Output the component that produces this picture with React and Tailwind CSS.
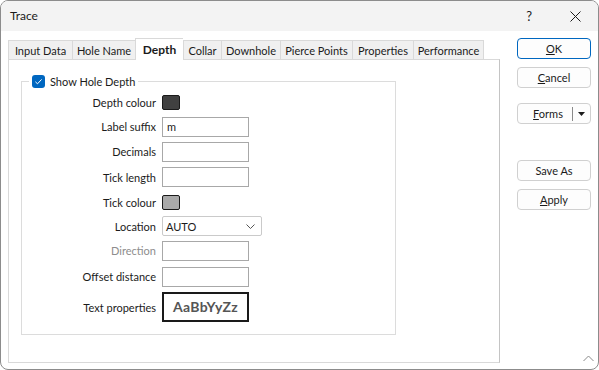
import React from "react";

const tabs = [
  { label: "Input Data", w: "w-[64px]" },
  { label: "Hole Name", w: "w-[63px]" },
  { label: "Depth", w: "w-[48px]", active: true },
  { label: "Collar", w: "w-[38px]" },
  { label: "Downhole", w: "w-[59px]" },
  { label: "Pierce Points", w: "w-[72px]" },
  { label: "Properties", w: "w-[61px]" },
  { label: "Performance", w: "w-[71px]", last: true },
];

function Row({ label, disabled, children, h }) {
  return (
    <div className={`flex items-center ${h}`}>
      <span
        className={`w-[134px] text-right ${disabled ? "text-[#8d8d8d]" : "text-[#1b1b1b]"}`}
      >
        {label}
      </span>
      <div className="ml-[6px] flex items-center">{children}</div>
    </div>
  );
}

function TextBox({ value }) {
  return (
    <div className="flex h-[20px] w-[87px] items-center border border-[#a8a8a8] bg-white px-[4px] text-[#1b1b1b]">
      {value}
    </div>
  );
}

function Swatch({ color }) {
  return <div className={`h-[15px] w-[18px] rounded-[2px] border border-[#1a1a1a] ${color}`} />;
}

function Button({ children, primary, className = "" }) {
  return (
    <button
      className={`flex h-[21px] w-[74px] items-center justify-center rounded-[4px] border bg-[#fdfdfd] text-[#1b1b1b] ${
        primary ? "border-[#0067c0]" : "border-[#d0d0d0]"
      } ${className}`}
    >
      {children}
    </button>
  );
}

export default function App() {
  return (
    <div className="flex h-[370px] w-[599px] flex-col overflow-hidden rounded-[8px] border border-[#8c8c8c] bg-white font-['Lato',sans-serif] text-[11px] leading-none">
      {/* title bar */}
      <div className="flex h-[30px] shrink-0 items-center bg-[#f3f3f3] pl-[9px] text-[12px] text-[#1b1b1b]">
        <span>Trace</span>
        <span className="ml-auto mr-[38px] text-[13px]">?</span>
        <svg width="11" height="11" viewBox="0 0 11 11" className="mr-[17px]">
          <path d="M0.5 0.5 L10.5 10.5 M10.5 0.5 L0.5 10.5" stroke="#1b1b1b" strokeWidth="1" />
        </svg>
      </div>

      <div className="flex flex-1 pl-[7px] pt-[7px]">
        {/* tabs + page */}
        <div className="flex w-[492px] flex-col">
          <div className="flex h-[21px] items-end">
            {tabs.map((t) =>
              t.active ? (
                <div
                  key={t.label}
                  className={`relative z-10 -mb-px flex h-[22px] ${t.w} shrink-0 items-center justify-center border-l border-t border-[#d9d9d9] bg-white text-[12px] font-bold text-[#1b1b1b]`}
                >
                  {t.label}
                </div>
              ) : (
                <div
                  key={t.label}
                  className={`flex h-[19px] ${t.w} shrink-0 items-center justify-center border-l border-t border-[#d9d9d9] bg-[#f0f0f0] text-[#1b1b1b] ${
                    t.last ? "border-r" : ""
                  }`}
                >
                  {t.label}
                </div>
              )
            )}
          </div>

          <div className="h-[304px] border border-[#d9d9d9] border-r-[#c4c4c4] bg-white pl-[12px] pt-[21px]">
            {/* group box */}
            <div className="relative h-[254px] w-[375px] border border-[#dcdcdc] pt-[8px]">
              <div className="absolute -top-[7px] left-[7px] flex items-center bg-white px-[3px] text-[#1b1b1b]">
                <span className="flex h-[13px] w-[13px] items-center justify-center rounded-[3px] bg-[#0067c0]">
                  <svg width="13" height="13" viewBox="0 0 13 13">
                    <path d="M3.4 6.8 L5.5 8.8 L9.6 4.4" fill="none" stroke="white" strokeWidth="1" />
                  </svg>
                </span>
                <span className="ml-[5px]">Show Hole Depth</span>
              </div>

              <Row label="Depth colour" h="h-[24px]">
                <Swatch color="bg-[#404040]" />
              </Row>
              <Row label="Label suffix" h="h-[25px]">
                <TextBox value="m" />
              </Row>
              <Row label="Decimals" h="h-[25px]">
                <TextBox />
              </Row>
              <Row label="Tick length" h="h-[26px]">
                <TextBox />
              </Row>
              <Row label="Tick colour" h="h-[24px]">
                <Swatch color="bg-[#a9a9a9]" />
              </Row>
              <Row label="Location" h="h-[24px]">
                <div className="flex h-[20px] w-[100px] items-center justify-between rounded-[2px] border border-[#cacaca] bg-white pl-[3px] pr-[6px] text-[#1b1b1b]">
                  <span>AUTO</span>
                  <svg width="9" height="5" viewBox="0 0 9 5">
                    <path d="M0.5 0.5 L4.5 4.5 L8.5 0.5" fill="none" stroke="#555" strokeWidth="1" />
                  </svg>
                </div>
              </Row>
              <Row label="Direction" disabled h="h-[25px]">
                <TextBox />
              </Row>
              <Row label="Offset distance" h="h-[27px]">
                <TextBox />
              </Row>
              <Row label="Text properties" h="h-[34px]">
                <div className="flex h-[30px] w-[87px] items-center justify-center border-2 border-[#1a1a1a] bg-white text-[14px] font-bold tracking-[0.3px] text-[#555]">
                  AaBbYyZz
                </div>
              </Row>
            </div>
          </div>
        </div>

        {/* buttons */}
        <div className="ml-[17px] flex w-[74px] flex-col">
          <Button primary>
            <span className="underline">O</span>K
          </Button>
          <Button className="mt-[8px]">
            <span className="underline">C</span>ancel
          </Button>
          <button className="mt-[15px] flex h-[21px] w-[74px] items-center rounded-[4px] border border-[#d0d0d0] bg-[#fdfdfd] text-[#1b1b1b]">
            <span className="flex-1 pl-[6px] text-center">
              <span className="underline">F</span>orms
            </span>
            <span className="h-[14px] w-px bg-[#8a8a8a]" />
            <svg width="7" height="4" viewBox="0 0 7 4" className="mx-[5px]">
              <path d="M0 0 L7 0 L3.5 4 Z" fill="#1b1b1b" />
            </svg>
          </button>
          <Button className="mt-[36px]">Save As</Button>
          <Button className="mt-[8px]">
            <span className="underline">A</span>pply
          </Button>
          <svg width="11" height="7" viewBox="0 0 11 7" className="ml-auto mr-[-3px] mt-auto mb-[7px]">
            <path d="M0.5 6 L5.5 1 L10.5 6" fill="none" stroke="#8a8a8a" strokeWidth="1" />
          </svg>
        </div>
      </div>
    </div>
  );
}
